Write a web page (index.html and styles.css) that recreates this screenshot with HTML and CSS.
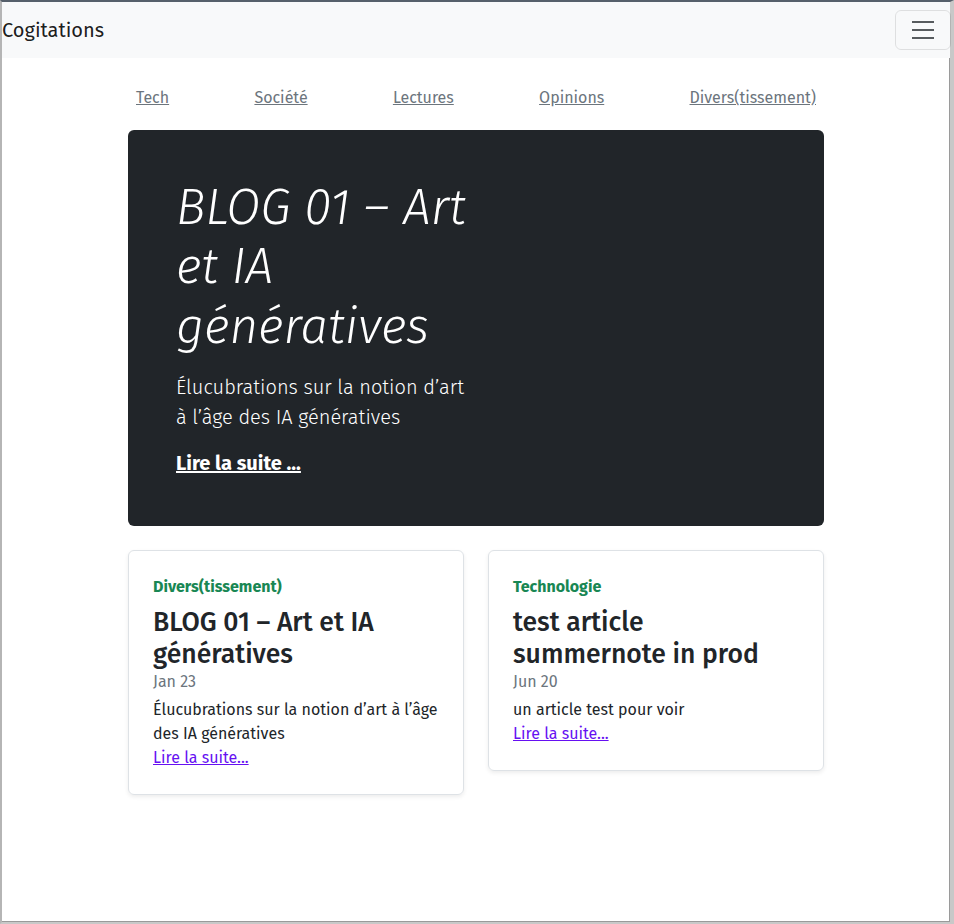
FILE: index.html
```html
<!DOCTYPE html>
<html lang="fr">
<head>
<meta charset="utf-8">
<title>Cogitations</title>
<link rel="stylesheet" href="styles.css">
</head>
<body>
<div class="frame">
  <header class="navbar">
    <a class="brand" href="#">Cogitations</a>
    <button class="toggler" type="button" aria-label="Menu">
      <svg width="30" height="30" viewBox="0 0 30 30" aria-hidden="true">
        <path d="M4 7h22M4 15h22M4 23h22" stroke="rgba(33,37,41,0.75)" stroke-width="2" stroke-linecap="butt" fill="none"/>
      </svg>
    </button>
  </header>

  <main class="container">
    <nav class="cats">
      <a href="#">Tech</a>
      <a href="#">Société</a>
      <a href="#">Lectures</a>
      <a href="#">Opinions</a>
      <a href="#">Divers(tissement)</a>
    </nav>

    <section class="hero">
      <div class="hero-col">
        <h1 class="hero-title">BLOG 01 – Art et IA génératives</h1>
        <p class="hero-lead">Élucubrations sur la notion d’art à l’âge des IA génératives</p>
        <p class="hero-more"><a href="#">Lire la suite ...</a></p>
      </div>
    </section>

    <div class="cards">
      <article class="card">
        <strong class="card-cat">Divers(tissement)</strong>
        <h3 class="card-title">BLOG 01 – Art et IA génératives</h3>
        <div class="card-date">Jan 23</div>
        <p class="card-text">Élucubrations sur la notion d’art à l’âge des IA génératives</p>
        <a class="card-link" href="#">Lire la suite...</a>
      </article>
      <article class="card">
        <strong class="card-cat">Technologie</strong>
        <h3 class="card-title">test article summernote in prod</h3>
        <div class="card-date">Jun 20</div>
        <p class="card-text">un article test pour voir</p>
        <a class="card-link" href="#">Lire la suite...</a>
      </article>
    </div>
  </main>
</div>
</body>
</html>
```

FILE: styles.css
```css
* { box-sizing: border-box; }

html, body {
  margin: 0;
  padding: 0;
  height: 100%;
  background: #d9d9d9;
}

body {
  font-family: "Fira Sans", "Open Sans", "Noto Sans", sans-serif;
  font-size: 16px;
  line-height: 1.5;
  color: #212529;
}

.frame {
  height: 924px;
  width: 954px;
  background: #fff;
  border-top: 2px solid #56606b;
  border-left: 2px solid #b5b5b5;
  border-right: 4px solid #c8c8c8;
  border-bottom: 2px solid #c8c8c8;
  box-shadow: inset -1px -1px 0 #9a9a9a;
}

.navbar {
  height: 56px;
  background: #f8f9fa;
  display: flex;
  align-items: center;
  justify-content: space-between;
  padding: 8px 0;
}

.brand {
  font-size: 20px;
  line-height: 30px;
  color: rgba(0, 0, 0, 0.9);
  text-decoration: none;
}

.toggler {
  width: 56px;
  height: 40px;
  padding: 4px 12px;
  background: transparent;
  border: 1px solid rgba(0, 0, 0, 0.1);
  border-radius: 6px;
  display: flex;
  align-items: center;
  justify-content: center;
  margin-right: -1px;
}

.toggler svg { display: block; }

.container {
  width: 696px;
  margin: 0 auto;
  padding-top: 24px;
}

.cats {
  display: flex;
  justify-content: space-between;
  margin-bottom: 16px;
}

.cats a {
  padding: 4px 8px;
  color: #6c757d;
  text-decoration: underline;
  font-size: 16px;
  line-height: 24px;
}

.hero {
  background: #212529;
  border-radius: 6px;
  padding: 48px;
  margin-bottom: 24px;
  color: #fff;
}

.hero-col {
  width: 300px;
}

.hero-title {
  margin: 0 0 8px;
  font-size: 49.4px;
  line-height: 1.2;
  font-weight: 300;
  font-style: italic;
}

.hero-lead {
  margin: 16px 0;
  font-size: 20px;
  line-height: 30px;
  font-weight: 300;
}

.hero-more {
  margin: 0;
  font-size: 20px;
  line-height: 30px;
  font-weight: 300;
}

.hero-more a {
  color: #fff;
  font-weight: 700;
  text-decoration: underline;
}

.cards {
  display: grid;
  grid-template-columns: 1fr 1fr;
  column-gap: 24px;
  align-items: start;
}

.card {
  border: 1px solid #dee2e6;
  border-radius: 6px;
  box-shadow: 0 2px 4px rgba(0, 0, 0, 0.075);
  padding: 24px;
  display: flex;
  flex-direction: column;
}

.card-cat {
  color: #198754;
  font-weight: 700;
  margin-bottom: 8px;
}

.card-title {
  margin: 0;
  font-size: 26.5px;
  line-height: 1.2;
  font-weight: 500;
}

.card-date {
  color: #6c757d;
  margin-bottom: 4px;
}

.card-text {
  margin: 0;
}

.card-link {
  color: #6610f2;
  text-decoration: underline;
  align-self: flex-start;
}
```
